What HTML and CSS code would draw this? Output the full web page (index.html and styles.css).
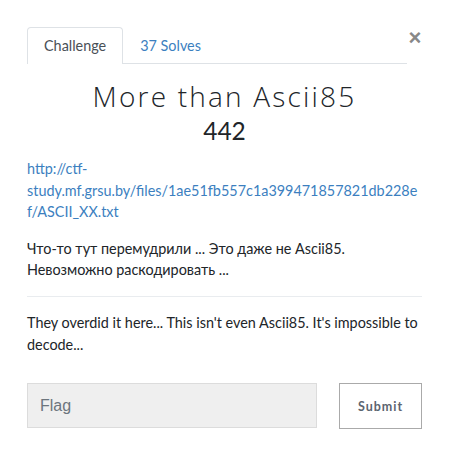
FILE: index.html
```html
<!DOCTYPE html>
<html lang="ru">
<head>
<meta charset="utf-8">
<title>More than Ascii85</title>
<link rel="stylesheet" href="styles.css">
</head>
<body>
<div class="modal">
  <div class="modal-head">
    <ul class="tabs">
      <li class="tab active">Challenge</li>
      <li class="tab">37 Solves</li>
    </ul>
    <button class="close" aria-label="Close">&times;</button>
  </div>
  <h3 class="title">More than Ascii85</h3>
  <h4 class="value">442</h4>
  <div class="desc">
    <p><a href="#">http://ctf-study.mf.grsu.by/files/1ae51fb557c1a399471857821db228ef/ASCII_XX.txt</a></p>
    <p>Что-то тут перемудрили ... Это даже не Ascii85. Невозможно раскодировать ...</p>
    <hr class="sep">
    <p>They overdid it here... This isn't even Ascii85. It's impossible to decode...</p>
  </div>
  <form class="submit-row">
    <input class="flag" type="text" placeholder="Flag">
    <button class="submit" type="button">Submit</button>
  </form>
</div>
</body>
</html>
```
FILE: styles.css
```css
html, body {
  margin: 0;
  padding: 0;
  background: #fff;
}
body {
  font-family: "Lato", "Liberation Sans", sans-serif;
  color: #212529;
  font-size: 14.4px;
  line-height: 21.6px;
}
.modal {
  width: 395px;
  padding: 27px 28px 0 27px;
}
.modal-head {
  display: flex;
  align-items: flex-start;
}
.tabs {
  flex: 1;
  display: flex;
  margin: 0 1px 0 0;
  padding: 0;
  list-style: none;
  border-bottom: 1px solid #dee2e6;
}
.tab {
  height: 35px;
  box-sizing: border-box;
  padding: 7px 16px 0 16px;
  font-size: 14.4px;
  color: #3c7fbf;
  border: 1px solid transparent;
  border-bottom: none;
  margin-bottom: -1px;
  border-radius: 4px 4px 0 0;
}
.tab.active {
  color: #495057;
  border-color: #dee2e6;
  background: #fff;
  height: 37px;
}
.close {
  border: none;
  background: none;
  padding: 0;
  margin: 1px 0 0 0;
  width: 14px;
  font-family: "Liberation Sans", sans-serif;
  font-size: 22px;
  line-height: 20px;
  font-weight: bold;
  color: #888;
}
.title {
  margin: 15px 0 0 0;
  text-align: center;
  font-family: "Open Sans", sans-serif;
  font-weight: 300;
  font-size: 28px;
  line-height: 34px;
  color: #212529;
  letter-spacing: 2.2px;
}
.value {
  margin: 4px 0 0 0;
  text-align: center;
  font-size: 24.5px;
  line-height: 28px;
  font-weight: 400;
  color: #212529;
}
.desc {
  margin-top: 13px;
  overflow-wrap: anywhere;
}
.desc p {
  margin: 0 0 15px 0;
}
.desc a {
  color: #3c7fbf;
  text-decoration: none;
}
.sep {
  border: none;
  border-top: 1px solid #e9ecef;
  margin: 0 0 15px 0;
}
.submit-row {
  display: flex;
  gap: 22px;
  margin-top: 28px;
}
.flag {
  flex: 1;
  height: 45px;
  box-sizing: border-box;
  margin: 0;
  border: 1px solid #dcdcdc;
  background: #efefef;
  padding: 0 12px;
  font-family: "Liberation Sans", sans-serif;
  font-size: 16px;
}
.flag::placeholder {
  color: #6c757d;
}
.submit {
  width: 83px;
  height: 46px;
  box-sizing: border-box;
  margin: 0;
  border: 1px solid #aaa;
  background: #fff;
  font-family: "Lato", sans-serif;
  font-weight: bold;
  font-size: 12.5px;
  letter-spacing: 1px;
  color: #5c6470;
}
```
